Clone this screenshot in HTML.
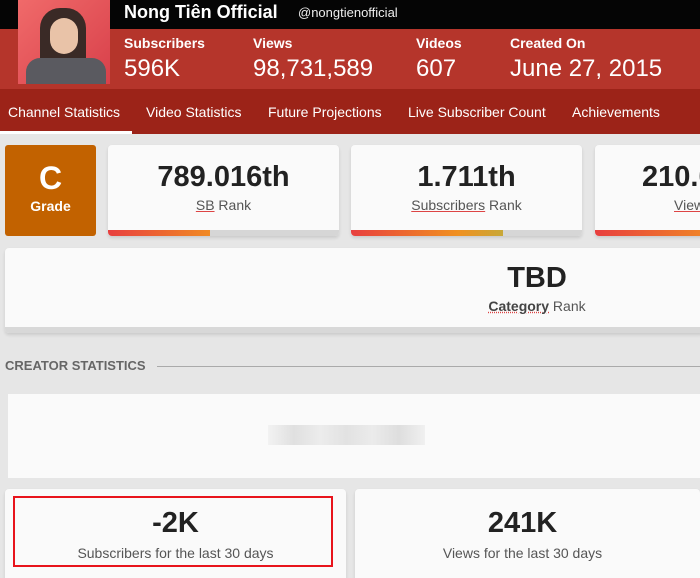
<!DOCTYPE html>
<html><head><style>
*{margin:0;padding:0;box-sizing:border-box}
html,body{width:700px;height:578px;overflow:hidden}
body{background:#e6e6e6;font-family:"Liberation Sans",sans-serif}
#w{position:relative;width:700px;height:578px;overflow:hidden}
.a{position:absolute}
.card{position:absolute;background:#fafafa;border-radius:4px;box-shadow:0 2px 3px rgba(0,0,0,.12);overflow:hidden}
.big{font-weight:bold;color:#222;text-align:center}
.sub{color:#555;text-align:center;font-size:14px}
.u{text-decoration:underline;text-decoration-color:#d44}
</style></head><body><div id="w">
<div class="a" style="left:0;top:0;width:700px;height:29px;background:#050505"></div>
<div class="a" style="left:0;top:29px;width:700px;height:60px;background:#b5352b"></div>
<div class="a" style="left:0;top:89px;width:700px;height:45px;background:#9c2318"></div>
<div class="a" style="left:0;top:131px;width:132px;height:3px;background:#fff"></div>
<div class="a" style="left:18px;top:0;width:92px;height:84px;background:linear-gradient(135deg,#f06a6a,#d8404a)"></div>
<div class="a" style="left:40px;top:8px;width:46px;height:76px;background:#3a2a26;border-radius:20px 20px 4px 4px"></div>
<div class="a" style="left:50px;top:18px;width:28px;height:36px;background:#e9c3a8;border-radius:14px"></div>
<div class="a" style="left:26px;top:58px;width:80px;height:26px;background:#5a5a60;border-radius:14px 14px 0 0"></div>
<div class="a" style="left:124px;top:2px;color:#fff;font-size:18px;font-weight:bold">Nong Tiên Official</div>
<div class="a" style="left:298px;top:5px;color:#eee;font-size:13px">@nongtienofficial</div>
<div class="a" style="left:124px;top:35px;color:#fff;font-size:14px;font-weight:bold">Subscribers</div>
<div class="a" style="left:253px;top:35px;color:#fff;font-size:14px;font-weight:bold">Views</div>
<div class="a" style="left:416px;top:35px;color:#fff;font-size:14px;font-weight:bold">Videos</div>
<div class="a" style="left:510px;top:35px;color:#fff;font-size:14px;font-weight:bold">Created On</div>
<div class="a" style="left:124px;top:55px;color:#fff;font-size:24px">596K</div>
<div class="a" style="left:253px;top:55px;color:#fff;font-size:24px">98,731,589</div>
<div class="a" style="left:416px;top:55px;color:#fff;font-size:24px">607</div>
<div class="a" style="left:510px;top:55px;color:#fff;font-size:24px">June 27, 2015</div>
<div class="a" style="left:8px;top:104px;color:#fff;font-size:14px">Channel Statistics</div>
<div class="a" style="left:146px;top:104px;color:#fff;font-size:14px">Video Statistics</div>
<div class="a" style="left:268px;top:104px;color:#fff;font-size:14px">Future Projections</div>
<div class="a" style="left:408px;top:104px;color:#fff;font-size:14px">Live Subscriber Count</div>
<div class="a" style="left:572px;top:104px;color:#fff;font-size:14px">Achievements</div>

<div class="a" style="left:5px;top:145px;width:91px;height:91px;background:#c26200;border-radius:3px;color:#fff;text-align:center;font-weight:bold">
<div style="font-size:32px;margin-top:15px">C</div><div style="font-size:14px;margin-top:1px">Grade</div></div>

<div class="card" style="left:108px;top:145px;width:231px;height:91px">
<div class="big" style="font-size:29px;margin-top:16px">789.016th</div><div class="sub" style="margin-top:3px"><span class="u">SB</span> Rank</div>
<div class="a" style="left:0;bottom:0;width:100%;height:6px;background:#d6d6d6"></div>
<div class="a" style="left:0;bottom:0;width:102px;height:6px;background:linear-gradient(90deg,#e83f3f,#f08a24)"></div></div>

<div class="card" style="left:351px;top:145px;width:231px;height:91px">
<div class="big" style="font-size:29px;margin-top:16px">1.711th</div><div class="sub" style="margin-top:3px"><span class="u">Subscribers</span> Rank</div>
<div class="a" style="left:0;bottom:0;width:100%;height:6px;background:#d6d6d6"></div>
<div class="a" style="left:0;bottom:0;width:152px;height:6px;background:linear-gradient(90deg,#e83f3f,#f09020 70%,#c8a838)"></div></div>

<div class="card" style="left:595px;top:145px;width:120px;height:91px">
<div class="a big" style="left:47px;top:16px;font-size:29px;white-space:nowrap;text-align:left">210.016th</div>
<div class="a sub" style="left:79px;top:52px;white-space:nowrap;text-align:left"><span class="u">Views</span> Rank</div>
<div class="a" style="left:0;bottom:0;width:100%;height:6px;background:linear-gradient(90deg,#e83f3f,#f08a24)"></div></div>

<div class="card" style="left:5px;top:248px;width:700px;height:85px">
<div class="a" style="left:0;bottom:0;width:100%;height:6px;background:#d8d8d8"></div>
<div class="a big" style="left:482px;top:14px;width:100px;font-size:29px">TBD</div>
<div class="a sub" style="left:452px;top:50px;width:160px"><b style="color:#444;text-decoration:underline dotted #d44">Category</b> Rank</div></div>

<div class="a" style="left:5px;top:358px;color:#666;font-size:13px;font-weight:bold">CREATOR STATISTICS</div>
<div class="a" style="left:157px;top:366px;width:543px;height:1px;background:#aaa"></div>

<div class="a" style="left:8px;top:394px;width:692px;height:84px;background:#fafafa"></div>
<div class="a" style="left:268px;top:425px;width:157px;height:20px;background:linear-gradient(90deg,#f2f2f2,#e0e0e0,#ececec,#e2e2e2,#ebebeb,#dedede,#f0f0f0)"></div>

<div class="card" style="left:5px;top:489px;width:341px;height:95px">
<div class="a" style="left:8px;top:7px;width:320px;height:71px;border:2px solid #e8141c"></div>
<div class="big" style="font-size:29px;margin-top:18px">-2K</div><div class="sub" style="margin-top:5px">Subscribers for the last 30 days</div></div>
<div class="card" style="left:355px;top:489px;width:345px;height:95px">
<div class="big" style="font-size:29px;margin-top:18px;margin-left:-10px">241K</div><div class="sub" style="margin-top:5px;margin-left:-10px">Views for the last 30 days</div></div>
</div></body></html>
